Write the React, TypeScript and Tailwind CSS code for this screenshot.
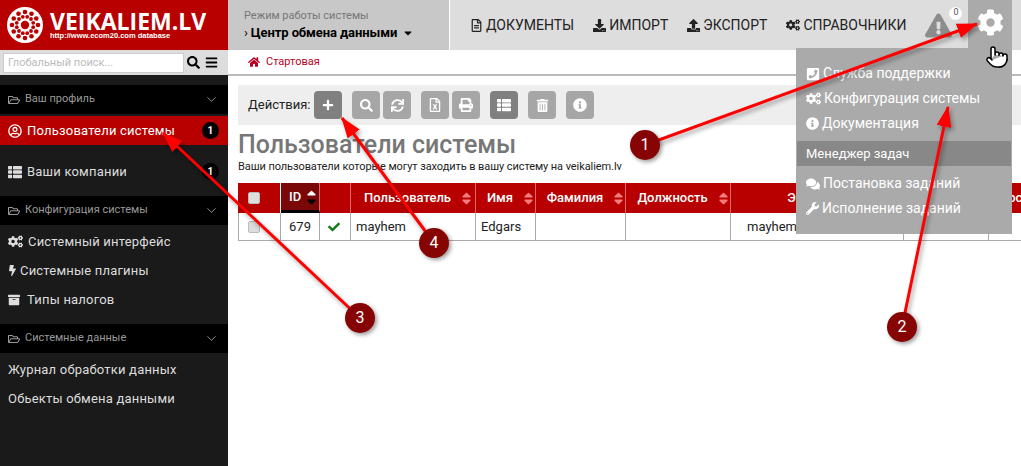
import React from 'react'
import { ChevronDown, Pointer } from 'lucide-react'
import {
  FaArchive, FaBars, FaBolt, FaCaretDown, FaCheck, FaCog, FaCogs, FaComments, FaDownload,
  FaExclamationTriangle, FaHome, FaInfoCircle, FaPhoneSquare, FaPlus, FaPrint, FaRegFileAlt,
  FaRegFileExcel, FaRegFolderOpen, FaRegUserCircle, FaSearch, FaSort, FaSortDown, FaSortUp, FaSync,
  FaThList, FaTrashAlt, FaUpload, FaWrench,
} from 'react-icons/fa'

function Logo() {
  const dots: any[] = []
  for (let i = 0; i < 12; i++) {
    const a = (i / 12) * Math.PI * 2
    dots.push(<circle key={'o' + i} cx={18 + Math.cos(a) * 13} cy={18 + Math.sin(a) * 13} r="2.3" fill="#b80000" />)
    const b = a + Math.PI / 12
    dots.push(<circle key={'m' + i} cx={18 + Math.cos(b) * 8.5} cy={18 + Math.sin(b) * 8.5} r="1.9" fill="#b80000" />)
  }
  return (
    <svg width="36" height="36" viewBox="0 0 36 36">
      <circle cx="18" cy="18" r="18" fill="#fff" />
      {dots}
      <circle cx="18" cy="18" r="4.2" fill="#b80000" />
    </svg>
  )
}

function Section({ title }: { title: string }) {
  return (
    <div className="h-[29px] bg-black flex items-center pl-2 pr-[9px] text-[#999] text-[11px]">
      <FaRegFolderOpen className="text-[12px] mr-[5px]" />
      <span className="flex-1">{title}</span>
      <ChevronDown size={15} strokeWidth={1.5} />
    </div>
  )
}

function Item({ icon, label, top }: { icon?: React.ReactNode; label: string; top: string }) {
  return (
    <div className={`flex items-center pl-2 text-[13px] tracking-[0.2px] text-[#ddd] h-[29px] ${top}`}>
      {icon}
      <span>{label}</span>
    </div>
  )
}

function Tool({ children, dark }: { children: React.ReactNode; dark?: boolean }) {
  return (
    <div className={`w-7 h-7 rounded flex items-center justify-center text-white text-[14px] ${dark ? 'bg-[#808080]' : 'bg-[#a6a6a6]'}`}>
      {children}
    </div>
  )
}

function Th({ w, label, sort = true }: { w: string; label?: string; sort?: boolean }) {
  return (
    <div className={`${w} shrink-0 h-full flex items-center justify-center pl-3 border-r border-[#e06a6a] text-[13px] font-medium text-white whitespace-nowrap`}>
      <span>{label}</span>
      {sort ? <FaSort className="ml-[8px] text-[15px] text-[#f47c7c] shrink-0" /> : null}
    </div>
  )
}

function Td({ w, children }: { w: string; children?: React.ReactNode }) {
  return (
    <div className={`${w} shrink-0 h-full flex items-center border-r border-[#aaa] text-[13px] text-[#222] whitespace-nowrap`}>
      {children}
    </div>
  )
}

function Bubble({ n, cls }: { n: number; cls: string }) {
  return (
    <div className={`absolute w-[30px] h-[30px] rounded-full bg-[#860404] text-white text-[16px] flex items-center justify-center shadow-[2px_2px_4px_rgba(0,0,0,0.4)] ${cls}`}>
      {n}
    </div>
  )
}

const arrows = [
  [645, 145, 977, 24],
  [902, 327, 948, 107],
  [360, 318, 163, 133],
  [434, 243, 342, 118],
]

export default function App() {
  return (
    <div className="relative w-[1021px] h-[466px] overflow-hidden bg-white flex font-['Roboto',sans-serif]">
      <aside className="w-[228px] shrink-0 bg-[#1a1a1a] flex flex-col">
        <div className="h-[50px] bg-[#b80000] flex items-center pl-[7px]">
          <Logo />
          <div className="ml-[7px] relative text-white">
            <div className="font-['Open_Sans',sans-serif] font-bold text-[23px] leading-[20px] mt-[-9px]">VEIKALIEM.LV</div>
            <div className="absolute top-[12px] left-0 text-[7.5px] leading-[8px] font-bold whitespace-nowrap font-['Liberation_Sans',sans-serif]">http://www.ecom20.com database</div>
          </div>
        </div>
        <div className="h-[25px] bg-[#ddd] flex items-center pl-[3px]">
          <input
            readOnly
            placeholder="Глобальный поиск..."
            className="w-[181px] h-[20px] bg-white border border-[#ccc] px-1 text-[11px] text-[#999] placeholder:text-[#bbb] outline-none"
          />
          <FaSearch className="ml-[3px] text-[13px] text-black" />
          <FaBars className="ml-[5px] text-[13px] text-black" />
        </div>
        <div className="mt-[10px]"><Section title="Ваш профиль" /></div>
        <div className="mt-[2px] h-[29px] bg-[#b80000] flex items-center pl-2 pr-[9px] text-white text-[13px] tracking-[0.2px]">
          <FaRegUserCircle className="text-[14px] mr-[5px]" />
          <span className="flex-1">Пользователи системы</span>
          <span className="w-[17px] h-[17px] rounded-full bg-black text-[10px] font-bold flex items-center justify-center">1</span>
        </div>
        <div className="mt-[12px] h-[29px] flex items-center pl-2 pr-[9px] text-[#ddd] text-[13px] tracking-[0.2px]">
          <FaThList className="text-[14px] mr-[5px]" />
          <span className="flex-1">Ваши компании</span>
          <span className="w-[17px] h-[17px] rounded-full bg-black text-white text-[10px] font-bold flex items-center justify-center">1</span>
        </div>
        <div className="mt-[10px]"><Section title="Конфигурация системы" /></div>
        <Item top="mt-[2px]" icon={<FaCogs className="text-[15px] mr-[5px]" />} label="Системный интерфейс" />
        <Item top="" icon={<FaBolt className="text-[11px] mr-[2px] -ml-px" />} label="Системные плагины" />
        <Item top="" icon={<FaArchive className="text-[12px] mr-[7px]" />} label="Типы налогов" />
        <div className="mt-[10px]"><Section title="Системные данные" /></div>
        <Item top="mt-[2px]" label="Журнал обработки данных" />
        <Item top="" label="Обьекты обмена данными" />
      </aside>

      <main className="flex-1 min-w-0 flex flex-col">
        <header className="h-[50px] bg-[#ddd] flex shrink-0">
          <div className="w-[222px] h-full bg-[#c8c8c8] border-r border-white pl-4 pt-[10px] shrink-0">
            <div className="text-[11px] leading-[12px] text-[#777]">Режим работы системы</div>
            <div className="text-[13px] leading-[16px] mt-[3px] font-bold text-black flex items-center tracking-[-0.1px]">
              <span className="font-normal mr-[3px]">›</span>Центр обмена данными
              <FaCaretDown className="ml-[5px] text-[12px]" />
            </div>
          </div>
          <nav className="flex items-center pl-5 gap-[19px] text-[14px] text-[#222] flex-1 h-[50px]">
            <span className="flex items-center gap-[3px]"><FaRegFileAlt className="text-[13px]" />ДОКУМЕНТЫ</span>
            <span className="flex items-center gap-[3px]"><FaDownload className="text-[13px]" />ИМПОРТ</span>
            <span className="flex items-center gap-[3px]"><FaUpload className="text-[13px]" />ЭКСПОРТ</span>
            <span className="flex items-center gap-[3px]"><FaCogs className="text-[14px]" />СПРАВОЧНИКИ</span>
            <span className="relative">
              <FaExclamationTriangle className="text-[27px] text-[#8c8c8c]" />
              <span className="absolute top-[-5px] left-[24px] w-[13px] h-[13px] rounded-full bg-white text-[9px] text-[#555] flex items-center justify-center">0</span>
            </span>
          </nav>
          <div className="w-[44px] h-[48px] bg-[#aaa] flex items-center justify-center text-white text-[27px] mr-[9px] shrink-0 pb-1">
            <FaCog />
          </div>
        </header>

        <div className="h-[26px] border-b-2 border-[#bbb] flex items-center pl-5 text-[11px] text-[#b80024] shrink-0">
          <FaHome className="text-[12px] mr-[6px]" />Стартовая
        </div>

        <div className="pl-[10px] flex flex-col min-w-0">
          <div className="h-[40px] mt-[9px] bg-[#eee] flex items-center pl-[10px]">
            <span className="text-[13px] text-[#222] mr-[3px] w-[63px]">Действия:</span>
            <Tool dark><FaPlus className="text-[12px]" /></Tool>
            <div className="ml-[10px]"><Tool><FaSearch className="text-[13px]" /></Tool></div>
            <div className="ml-[3px]"><Tool><FaSync className="text-[13px]" /></Tool></div>
            <div className="ml-[10px]"><Tool><FaRegFileExcel /></Tool></div>
            <div className="ml-[3px]"><Tool><FaPrint /></Tool></div>
            <div className="ml-[10px]"><Tool dark><FaThList /></Tool></div>
            <div className="ml-[10px]"><Tool><FaTrashAlt className="text-[13px]" /></Tool></div>
            <div className="ml-[10px]"><Tool><FaInfoCircle /></Tool></div>
          </div>
          <h1 className="font-medium text-[25px] leading-[28px] mt-[6px] text-[#777]">Пользователи системы</h1>
          <p className="text-[11px] leading-[13px] mt-[1px] text-[#222] tracking-[-0.08px]">Ваши пользователи которые могут заходить в вашу систему на veikaliem.lv</p>

          <div className="mt-[10px] w-[900px]">
            <div className="h-[30px] bg-[#b80000] flex">
              <div className="w-[43px] shrink-0 h-full flex items-center pl-[10px] border-r border-white">
                <span className="w-[12px] h-[12px] rounded-[2px] bg-[#ddd] border border-[#bbb]" />
              </div>
              <div className="w-[39px] shrink-0 h-full bg-[#7a0808] border-b-[3px] border-black border-r border-r-[#e06a6a] flex items-center pl-2 text-[13px] font-medium text-white">
                ID
                <span className="relative inline-block w-[10px] h-4 ml-[3px]">
                  <FaSortUp className="absolute top-0 left-0 text-[15px] text-white" />
                  <FaSortDown className="absolute top-[2px] left-0 text-[15px] text-black" />
                </span>
              </div>
              <Th w="w-[31px]" sort={false} />
              <Th w="w-[125px]" label="Пользователь" />
              <Th w="w-[60px]" label="Имя" />
              <Th w="w-[90px]" label="Фамилия" />
              <Th w="w-[105px]" label="Должность" />
              <Th w="w-[173px]" label="Э-почта" />
              <Th w="w-[85px]" sort={false} />
              <div className="flex-1 h-full flex items-center pl-[10px] text-[13px] font-medium text-white whitespace-nowrap">Последний вход</div>
            </div>
            <div className="h-[28px] flex border-b border-l border-[#aaa]">
              <div className="w-[42px] shrink-0 h-full flex items-center pl-[9px] border-r border-[#aaa]">
                <span className="w-[12px] h-[12px] rounded-[2px] bg-[#ddd] border border-[#bbb]" />
              </div>
              <Td w="w-[39px] justify-center">679</Td>
              <Td w="w-[31px] justify-center pr-[3px]"><FaCheck className="text-[12px] text-[#1a7a1a]" /></Td>
              <Td w="w-[125px] pl-[5px]">mayhem</Td>
              <Td w="w-[60px] pl-[5px]">Edgars</Td>
              <Td w="w-[90px]" />
              <Td w="w-[105px]" />
              <Td w="w-[173px] pl-4">mayhem@example.lv</Td>
              <Td w="w-[85px]" />
            </div>
          </div>
        </div>
      </main>

      {/* gear dropdown */}
      <div className="absolute left-[796px] top-[48px] w-[216px] h-[186px] bg-[#aaa] pt-[13px] text-white text-[14px]">
        <div className="pl-[10px] h-[25px] flex items-center gap-[3px]"><FaPhoneSquare className="text-[14px]" />Служба поддержки</div>
        <div className="pl-[10px] h-[25px] flex items-center gap-[3px]"><FaCogs className="text-[15px]" />Конфигурация системы</div>
        <div className="pl-[10px] h-[25px] flex items-center gap-[3px]"><FaInfoCircle className="text-[13px]" />Документация</div>
        <div className="mx-[1px] mt-[5px] h-[25px] bg-[#888] pl-[9px] flex items-center text-[13px]">Менеджер задач</div>
        <div className="mt-[5px] pl-[10px] h-[25px] flex items-center gap-[3px]"><FaComments className="text-[14px]" />Постановка заданий</div>
        <div className="pl-[10px] h-[25px] flex items-center gap-[3px]"><FaWrench className="text-[13px]" />Исполнение заданий</div>
      </div>

      <svg className="absolute left-0 top-0 pointer-events-none drop-shadow-[2px_3px_2px_rgba(0,0,0,0.35)]" width="1021" height="466" viewBox="0 0 1021 466">
        <defs>
          <marker id="head" markerWidth="7" markerHeight="5" refX="6.6" refY="2.5" orient="auto">
            <polygon points="0 0, 7 2.5, 0 5" fill="#ff0000" />
          </marker>
        </defs>
        {arrows.map((a, i) => (
          <line key={i} x1={a[0]} y1={a[1]} x2={a[2]} y2={a[3]} stroke="#ff0000" strokeWidth="3" markerEnd="url(#head)" />
        ))}
      </svg>

      <Bubble n={1} cls="left-[630px] top-[130px]" />
      <Bubble n={2} cls="left-[887px] top-[312px]" />
      <Bubble n={3} cls="left-[345px] top-[303px]" />
      <Bubble n={4} cls="left-[419px] top-[228px]" />

      <Pointer className="absolute left-[985px] top-[45px] text-black fill-white" size={24} strokeWidth={1.5} />
    </div>
  )
}
